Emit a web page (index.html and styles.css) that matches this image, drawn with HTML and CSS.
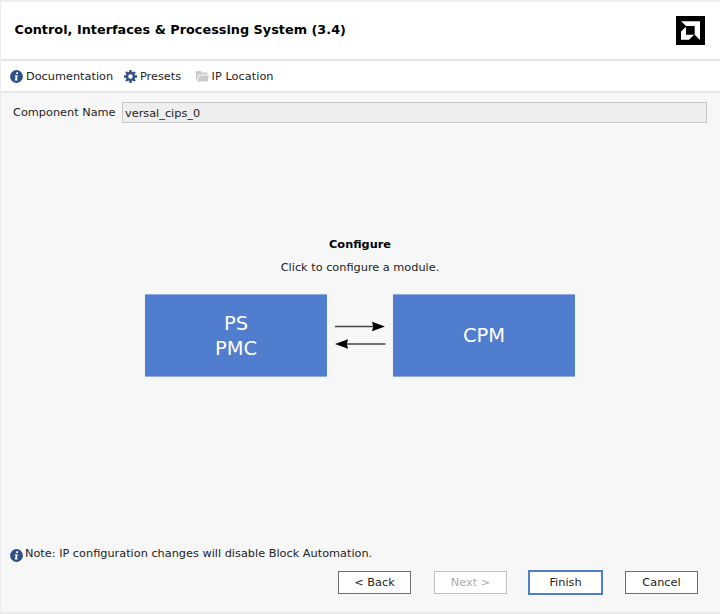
FILE: index.html
```html
<!DOCTYPE html>
<html lang="en">
<head>
<meta charset="utf-8">
<title>Control, Interfaces &amp; Processing System (3.4)</title>
<link rel="stylesheet" href="styles.css">
</head>
<body>
<div class="window">
  <header class="header">
    <h1 class="title">Control, Interfaces &amp; Processing System (3.4)</h1>
    <svg class="logo" viewBox="0 0 29 29"><path fill="#000" d="M0 0h29v29H0z"/><path fill="#fff" d="M5.200 5.300H24V24l-5.300-5.300V10H10zM10 10.700v8h8.200L13 23.800H5v-8.200z"/></svg>
  </header>
  <nav class="toolbar">
    <a class="tool doc"><svg class="icon" viewBox="0 0 13 13"><circle cx="6.5" cy="6.5" r="6.4" fill="#305088"/><path fill="#fff" d="M6.4 2.3h1.8l-.4 1.8H6zM5 5.2h2.8l-.9 4.2h.9l-.2 1H4.8l.9-4.2h-.9z"/></svg><span>Documentation</span></a>
    <a class="tool presets"><svg class="icon" viewBox="0 0 13 13"><g stroke="#305088" stroke-width="2.4"><path d="M6.500 0v13M0 6.500h13M2 2l9 9M11 2l-9 9"/></g><circle cx="6.5" cy="6.5" r="3.5" fill="#fff" stroke="#305088" stroke-width="2.4"/></svg><span>Presets</span></a>
    <a class="tool location"><svg class="folder" viewBox="0 0 13 11"><path fill="#cbcbcb" d="M0 0h5l1.300 1.600h5.200v2H2.800L.9 8.800H0zM3.400 4.600H13l-1.400 5.900H1.300z"/></svg><span>IP Location</span></a>
  </nav>
  <main class="content">
    <div class="field"><div class="label">Component Name</div><div class="input">versal_cips_0</div></div>
    <section class="configure">
      <h2 class="heading">Configure</h2>
      <p class="hint">Click to configure a module.</p>
      <div class="modules">
        <div class="module"><span>PS</span><span>PMC</span></div>
        <svg class="arrows" viewBox="0 0 66 82"><g stroke="#444" stroke-width="1.4"><path d="M8 32.500h38M20 50h38.500"/></g><path d="M45 27.700l13 4.800-13 4.800 1.200-4.800zM21 45.200L8 50l13 4.800-1.200-4.800z"/></svg>
        <div class="module"><span>CPM</span></div>
      </div>
    </section>
  </main>
  <footer class="footer">
    <div class="note"><svg class="icon" viewBox="0 0 13 13"><circle cx="6.5" cy="6.5" r="6.4" fill="#305088"/><path fill="#fff" d="M6.4 2.3h1.8l-.4 1.8H6zM5 5.2h2.8l-.9 4.2h.9l-.2 1H4.8l.9-4.2h-.9z"/></svg><span>Note: IP configuration changes will disable Block Automation.</span></div>
    <div class="actions">
      <button class="button">&lt; Back</button>
      <button class="button" disabled>Next &gt;</button>
      <button class="button primary">Finish</button>
      <button class="button">Cancel</button>
    </div>
  </footer>
</div>
</body>
</html>
```
FILE: styles.css
```css
* { box-sizing: border-box; }
body { margin: 0; font: 11.3px/14px "DejaVu Sans", sans-serif; color: #222; }
svg { display: block; flex: none; }
.window { height: 614px; display: flex; flex-direction: column; background: #f7f7f7; border-top: 2px solid #ededf2; border-left: 1px solid #ececee; border-bottom: 2px solid #ebebeb; }
.header { height: 59px; flex: none; display: flex; align-items: center; justify-content: space-between; padding: 0 15px 0 13.5px; background: #fff; border-bottom: 2px solid #e6e6e6; }
.title { margin: 0; padding-bottom: 1px; font-size: 12.8px; line-height: 16px; letter-spacing: 0.02px; color: #000; }
.logo { width: 29px; height: 29px; }
.toolbar { height: 32px; flex: none; display: flex; align-items: center; padding: 0 0 0 9px; background: #fff; border-bottom: 2px solid #e8e8e8; }
.tool { display: flex; align-items: center; gap: 3px; }
.tool span { padding-top: 1px; }
.doc { width: 114px; }
.presets { width: 71.5px; }
.location { letter-spacing: 0.05px; }
.icon { width: 13px; height: 13px; }
.folder { width: 13px; height: 11px; }
.content { flex: 1; }
.field { display: flex; align-items: center; padding: 9px 13px 0 12px; }
.label { width: 109px; padding-top: 1px; }
.input { flex: 1; height: 21px; padding: 3px 2px 1px; line-height: 15px; background: #eee; border: 1px solid #c8c8c8; }
.configure { padding: 115px 1px 0 0; display: flex; flex-direction: column; align-items: center; }
.heading { margin: 0; font-size: 11.3px; line-height: 14px; color: #000; }
.hint { margin: 9px 0 19px; }
.modules { display: flex; }
.module { width: 182px; height: 83px; display: flex; flex-direction: column; align-items: center; justify-content: center; background: #507dce; border-top: 1px solid #8eace0; border-bottom: 1px solid #8eace0; color: #fff; font-size: 19.5px; line-height: 25px; }
.arrows { width: 66px; height: 82px; }
.footer { flex: none; height: 66px; padding: 1px 22px 0 9px; }
.note { display: flex; align-items: center; gap: 2px; height: 14px; }
.note .icon { margin-top: 2px; }
.actions { display: flex; justify-content: flex-end; align-items: center; gap: 22px; margin-top: 9px; }
.button { width: 73px; height: 23px; padding: 0; background: #fff; border: 1px solid #6e6e6e; border-radius: 0; font: inherit; color: #222; }
.button:first-child { margin-right: 1px; }
.button:disabled { color: #aaa; border-color: #bfbfbf; margin-right: -1px; }
.primary { width: 75px; height: 25px; border: 2px solid #507dce; }
```
